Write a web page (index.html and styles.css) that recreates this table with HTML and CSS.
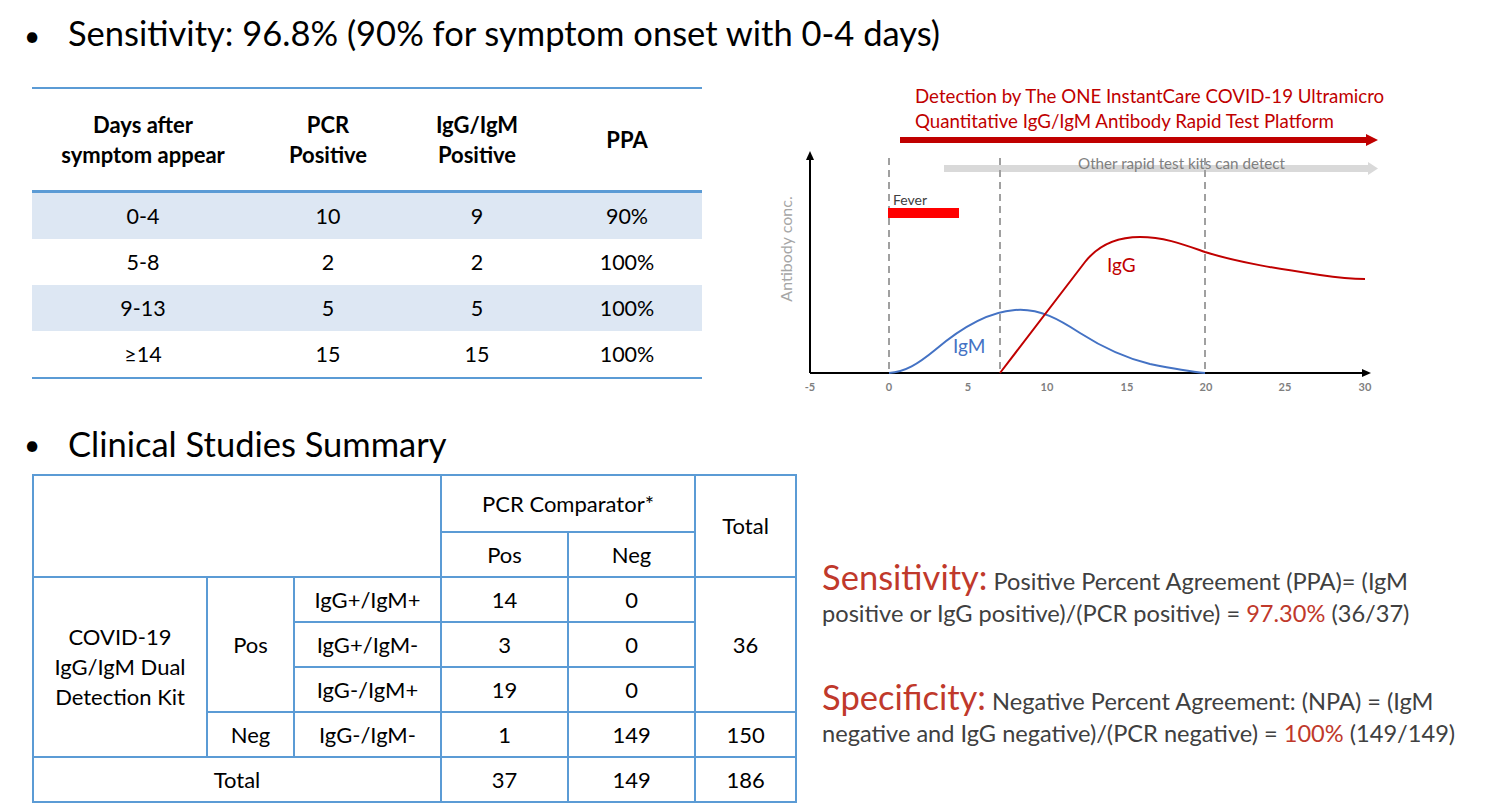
FILE: index.html
```html
<!DOCTYPE html>
<html>
<head>
<meta charset="utf-8">
<link rel="stylesheet" href="styles.css">
</head>
<body>
<div class="slide">
  <div class="bullet-line title1">
    <span class="dot">•</span>
    <span>Sensitivity: 96.8% (90% for symptom onset with 0-4 days)</span>
  </div>

  <div class="top">
    <table class="ppa">
      <thead>
        <tr>
          <th class="c1">Days after<br>symptom appear</th>
          <th class="c2">PCR<br>Positive</th>
          <th class="c3">IgG/IgM<br>Positive</th>
          <th class="c4">PPA</th>
        </tr>
      </thead>
      <tbody>
        <tr class="band"><td>0-4</td><td>10</td><td>9</td><td>90%</td></tr>
        <tr><td>5-8</td><td>2</td><td>2</td><td>100%</td></tr>
        <tr class="band"><td>9-13</td><td>5</td><td>5</td><td>100%</td></tr>
        <tr><td>≥14</td><td>15</td><td>15</td><td>100%</td></tr>
      </tbody>
    </table>

    <svg class="chart" width="640" height="330" viewBox="760 80 640 330" xmlns="http://www.w3.org/2000/svg">
      <text class="hd" x="915" y="103">Detection by The ONE InstantCare COVID-19 Ultramicro</text>
      <text class="hd" x="915" y="128">Quantitative IgG/IgM Antibody Rapid Test Platform</text>
      <line x1="900" y1="140" x2="1368" y2="140" stroke="#c00000" stroke-width="6"/>
      <polygon points="1366,134 1378,140 1366,146" fill="#c00000"/>
      <line x1="944" y1="168.5" x2="1370" y2="168.5" stroke="#d9d9d9" stroke-width="7"/>
      <polygon points="1368,162 1378,168.5 1368,175" fill="#d9d9d9"/>
      <text class="other" x="1078" y="169">Other rapid test kits can detect</text>

      <line x1="889" y1="158" x2="889" y2="372" class="dash"/>
      <line x1="1000" y1="158" x2="1000" y2="372" class="dash"/>
      <line x1="1205" y1="158" x2="1205" y2="372" class="dash"/>

      <text class="fever" x="893" y="205">Fever</text>
      <rect x="888" y="208" width="71" height="10" fill="#ff0000"/>

      <text class="ylab" transform="translate(792 249) rotate(-90)" text-anchor="middle">Antibody conc.</text>

      <line x1="810" y1="373" x2="1364" y2="373" stroke="#000" stroke-width="2"/>
      <polygon points="1362,369 1371,373 1362,377" fill="#000"/>
      <line x1="810" y1="373" x2="810" y2="158" stroke="#000" stroke-width="2"/>
      <polygon points="806,160 810,151 814,160" fill="#000"/>

      <g class="ticks" text-anchor="middle">
        <text x="810" y="391">-5</text>
        <text x="889" y="391">0</text>
        <text x="968" y="391">5</text>
        <text x="1047" y="391">10</text>
        <text x="1127" y="391">15</text>
        <text x="1206" y="391">20</text>
        <text x="1285" y="391">25</text>
        <text x="1365" y="391">30</text>
      </g>

      <path d="M889,373 C905,372 918,364 935,350 C955,333 985,312 1015,310 C1040,308 1060,320 1080,333 C1105,349 1125,358 1150,364 C1175,369 1195,372 1205,373" fill="none" stroke="#4472c4" stroke-width="2"/>
      <path d="M1000,373 L1085,262 C1100,243 1120,237 1140,237 C1165,237 1185,245 1205,252 C1240,263 1280,269 1320,275 C1340,278 1355,279 1365,279" fill="none" stroke="#c00000" stroke-width="2"/>
      <text class="igm" x="953" y="353">IgM</text>
      <text class="igg" x="1107" y="272">IgG</text>
    </svg>
  </div>

  <div class="bullet-line title2">
    <span class="dot">•</span>
    <span>Clinical Studies Summary</span>
  </div>

  <div class="bottom">
    <table class="clin">
      <colgroup>
        <col class="w1"><col class="w2"><col class="w3"><col class="w4"><col class="w5"><col class="w6">
      </colgroup>
      <tr class="h1">
        <td colspan="3" rowspan="2"></td>
        <td colspan="2">PCR Comparator*</td>
        <td rowspan="2">Total</td>
      </tr>
      <tr class="r"><td>Pos</td><td>Neg</td></tr>
      <tr class="r">
        <td rowspan="4">COVID-19<br>IgG/IgM Dual<br>Detection Kit</td>
        <td rowspan="3">Pos</td>
        <td>IgG+/IgM+</td><td>14</td><td>0</td>
        <td rowspan="3">36</td>
      </tr>
      <tr class="r"><td>IgG+/IgM-</td><td>3</td><td>0</td></tr>
      <tr class="r"><td>IgG-/IgM+</td><td>19</td><td>0</td></tr>
      <tr class="r"><td>Neg</td><td>IgG-/IgM-</td><td>1</td><td>149</td><td>150</td></tr>
      <tr class="r"><td colspan="3">Total</td><td>37</td><td>149</td><td>186</td></tr>
    </table>

    <div class="summary">
      <p><span class="big">Sensitivity:</span> Positive Percent Agreement (PPA)= (IgM<br>positive or IgG positive)/(PCR positive) = <span class="red">97.30%</span> (36/37)</p>
      <p><span class="big">Specificity:</span> Negative Percent Agreement: (NPA) = (IgM<br>negative and IgG negative)/(PCR negative) = <span class="red">100%</span> (149/149)</p>
    </div>
  </div>
</div>
</body>
</html>
```

FILE: styles.css
```css
html, body {
  margin: 0;
  padding: 0;
  background: #ffffff;
}

body {
  font-family: "Lato", "Liberation Sans", sans-serif;
  color: #000;
  width: 1491px;
  height: 810px;
  overflow: hidden;
}

.slide {
  display: flex;
  flex-direction: column;
}

.bullet-line {
  display: flex;
  align-items: baseline;
  font-size: 34.5px;
  line-height: 40px;
}

.bullet-line .dot {
  width: 68px;
  padding-left: 24px;
  box-sizing: border-box;
  font-size: 28px;
}

.title1 {
  padding-top: 13px;
  height: 80px;
  box-sizing: border-box;
}

.top {
  display: flex;
  align-items: flex-start;
  height: 340px;
}

.ppa {
  margin-left: 32px;
  margin-top: 7px;
  width: 670px;
  border-collapse: collapse;
  font-size: 21.5px;
  table-layout: fixed;
}

.ppa thead tr {
  border-top: 2px solid #5b9bd5;
  border-bottom: 3px solid #5b9bd5;
}

.ppa th {
  height: 101px;
  font-size: 22px;
  font-weight: 700;
  line-height: 30px;
  text-align: center;
  padding: 0;
}

.ppa .c1 { width: 222px; }
.ppa .c2 { width: 148px; }
.ppa .c3 { width: 150px; }
.ppa .c4 { width: 150px; }

.ppa td {
  height: 46px;
  text-align: center;
  padding: 0;
}

.ppa tbody tr:last-child {
  border-bottom: 2px solid #5b9bd5;
}

.ppa .band {
  background: #dde7f3;
}

.chart {
  display: block;
  margin-left: 58px;
}

.chart .hd {
  font-size: 18.7px;
  fill: #c00000;
}

.chart .other {
  font-size: 15.2px;
  fill: #808080;
}

.chart .fever {
  font-size: 14px;
  fill: #404040;
}

.chart .ylab {
  font-size: 16px;
  fill: #a6a6a6;
}

.chart .ticks {
  font-size: 11px;
  font-weight: 700;
  fill: #7f7f7f;
}

.chart .dash {
  stroke: #a0a0a0;
  stroke-width: 2;
  stroke-dasharray: 7 5;
}

.chart .igm {
  font-size: 19px;
  fill: #4472c4;
}

.chart .igg {
  font-size: 19px;
  fill: #c00000;
}

.title2 {
  height: 54px;
  padding-bottom: 6px;
  box-sizing: border-box;
  align-items: center;
}

.bottom {
  display: flex;
  align-items: flex-start;
}

.clin {
  margin-left: 32px;
  border-collapse: collapse;
  table-layout: fixed;
  width: 763px;
  font-size: 22px;
}

.clin .w1 { width: 174px; }
.clin .w2 { width: 87px; }
.clin .w3 { width: 147px; }
.clin .w4 { width: 127px; }
.clin .w5 { width: 127px; }
.clin .w6 { width: 101px; }

.clin td {
  border: 2px solid #5b9bd5;
  text-align: center;
  padding: 0;
  line-height: 30px;
}

.clin .h1 td {
  height: 55px;
}

.clin .r td {
  height: 43px;
}

.summary {
  margin-left: 25px;
  margin-top: 87px;
  color: #404040;
  font-size: 23.6px;
  line-height: 32px;
}

.summary p {
  margin: 0 0 52px 0;
}

.summary .big {
  font-size: 34.5px;
  color: #c0392b;
}

.summary .red {
  color: #c0392b;
}
```
